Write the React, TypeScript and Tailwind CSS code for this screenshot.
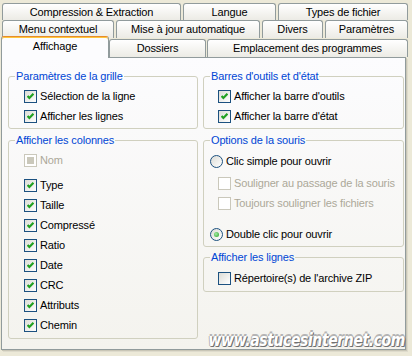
import type { ReactNode } from 'react'

function Tab({ label, className }: { label: string; className: string }) {
  return (
    <div
      className={`flex items-center justify-center rounded-t-[3px] border border-b-0 border-[#919b9c] bg-linear-to-b from-white to-[#ecebe5] ${className}`}
    >
      {label}
    </div>
  )
}

function Check({ checked, disabled }: { checked?: boolean; disabled?: boolean }) {
  if (disabled) {
    return (
      <span className="flex h-[13px] w-[13px] shrink-0 items-center justify-center border border-[#cac8bb] bg-white">
        {checked && <span className="h-[7px] w-[7px] bg-[#cac8bb]" />}
      </span>
    )
  }
  return (
    <span className="flex h-[13px] w-[13px] shrink-0 items-center justify-center border border-[#1c5180] bg-linear-to-br from-[#dcdcd6] to-white">
      {checked && (
        <svg width="7" height="7" viewBox="0 0 7 7">
          <polyline points="0.6,3 2.4,5 6.4,0.8" fill="none" stroke="#21a121" strokeWidth="2.1" />
        </svg>
      )}
    </span>
  )
}

function Radio({ on }: { on?: boolean }) {
  return (
    <span className="flex h-[13px] w-[13px] shrink-0 items-center justify-center rounded-full border border-[#1c5180] bg-linear-to-br from-[#dcdcd6] to-white">
      {on && <span className="h-[5px] w-[5px] rounded-full bg-[radial-gradient(circle_at_40%_40%,#a6eba6,#21a121)]" />}
    </span>
  )
}

function Row({ children, label, disabled, className = '' }: { children: ReactNode; label: string; disabled?: boolean; className?: string }) {
  return (
    <div className={`flex h-[20px] items-center ${className}`}>
      {children}
      <span className={`ml-[3px] ${disabled ? 'text-[#aca899]' : 'text-black'}`}>{label}</span>
    </div>
  )
}

function Group({ title, className = '', children }: { title: string; className?: string; children: ReactNode }) {
  return (
    <fieldset className={`rounded-[3px] border border-[#d0d0bf] ${className}`}>
      <legend className="ml-[6px] px-[1px] leading-[13px] text-[#0046d5]">{title}</legend>
      {children}
    </fieldset>
  )
}

const columns = ['Type', 'Taille', 'Compressé', 'Ratio', 'Date', 'CRC', 'Attributs', 'Chemin']

export default function App() {
  return (
    <div className="relative h-[356px] w-[412px] overflow-hidden bg-[#ece9d8] pt-[3px] font-['Liberation_Sans',Arial,sans-serif] text-[11px] tracking-[-0.15px] text-black">
      <div className="flex h-[17px] gap-[2px] pl-[2px]">
        <Tab label="Compression & Extraction" className="w-[179px]" />
        <Tab label="Langue" className="w-[93px]" />
        <Tab label="Types de fichier" className="w-[130px]" />
      </div>
      <div className="flex h-[18px] gap-[2px] pl-[2px]">
        <Tab label="Menu contextuel" className="w-[112px]" />
        <Tab label="Mise à jour automatique" className="w-[144px]" />
        <Tab label="Divers" className="w-[61px]" />
        <Tab label="Paramètres" className="w-[83px]" />
      </div>
      <div className="flex h-[19px] items-end pl-[1px]">
        <div className="relative z-10 -mb-[1px] flex h-[22px] w-[108px] items-center justify-center rounded-t-[3px] border border-b-0 border-[#919b9c] border-t-[#e68b2c] bg-[#fcfcfe] pb-[2px] shadow-[inset_0_1px_0_#ffc73c]">
          Affichage
        </div>
        <Tab label="Dossiers" className="h-[18px] w-[97px]" />
        <Tab label="Emplacement des programmes" className="ml-[1px] h-[18px] w-[201px]" />
      </div>

      <div className="ml-[1px] flex h-[293px] w-[405px] gap-[5px] border border-[#919b9c] bg-linear-to-b from-[#fcfcfe] to-[#f4f3ee] pl-[6px] pt-[12px] shadow-[1px_1px_0_#c9c6b6,2px_2px_0_#dedbcc]">
        <div className="flex w-[190px] flex-col">
          <Group title="Paramètres de la grille">
            <div className="pb-[2px] pl-[15px] pt-[3px]">
              <Row label="Sélection de la ligne"><Check checked /></Row>
              <Row label="Afficher les lignes"><Check checked /></Row>
            </div>
          </Group>
          <Group title="Afficher les colonnes" className="mt-[5px]">
            <div className="pb-[3px] pl-[15px] pt-[3px]">
              <Row label="Nom" disabled className="mb-[5px]"><Check checked disabled /></Row>
              {columns.map((c) => (
                <Row key={c} label={c}><Check checked /></Row>
              ))}
            </div>
          </Group>
        </div>

        <div className="flex w-[201px] flex-col">
          <Group title="Barres d'outils et d'état">
            <div className="pb-[2px] pl-[14px] pt-[3px]">
              <Row label="Afficher la barre d'outils"><Check checked /></Row>
              <Row label="Afficher la barre d'état"><Check checked /></Row>
            </div>
          </Group>
          <Group title="Options de la souris" className="mt-[5px]">
            <div className="pb-[2px] pl-[6px] pt-[4px]">
              <Row label="Clic simple pour ouvrir"><Radio /></Row>
              <Row label="Souligner au passage de la souris" disabled className="ml-[8px] mt-[2px]"><Check disabled /></Row>
              <Row label="Toujours souligner les fichiers" disabled className="ml-[8px]"><Check disabled /></Row>
              <Row label="Double clic pour ouvrir" className="mt-[11px]"><Radio on /></Row>
            </div>
          </Group>
          <Group title="Afficher les lignes" className="mt-[4px]">
            <div className="pb-[3px] pl-[14px] pt-[4px]">
              <Row label="Répertoire(s) de l'archive ZIP"><Check /></Row>
            </div>
          </Group>
        </div>
      </div>

      <div className="absolute bottom-[3px] right-[7px] z-20 origin-bottom scale-y-125 font-['DejaVu_Sans',Verdana,sans-serif] text-[14px] font-bold italic tracking-[-0.4px] text-white [text-shadow:1px_1px_0_#707070,-1px_0_0_#b5b5b5,0_-1px_0_#b5b5b5,1px_0_0_#999,0_1px_0_#999]">
        www.astucesinternet.com
      </div>
    </div>
  )
}
